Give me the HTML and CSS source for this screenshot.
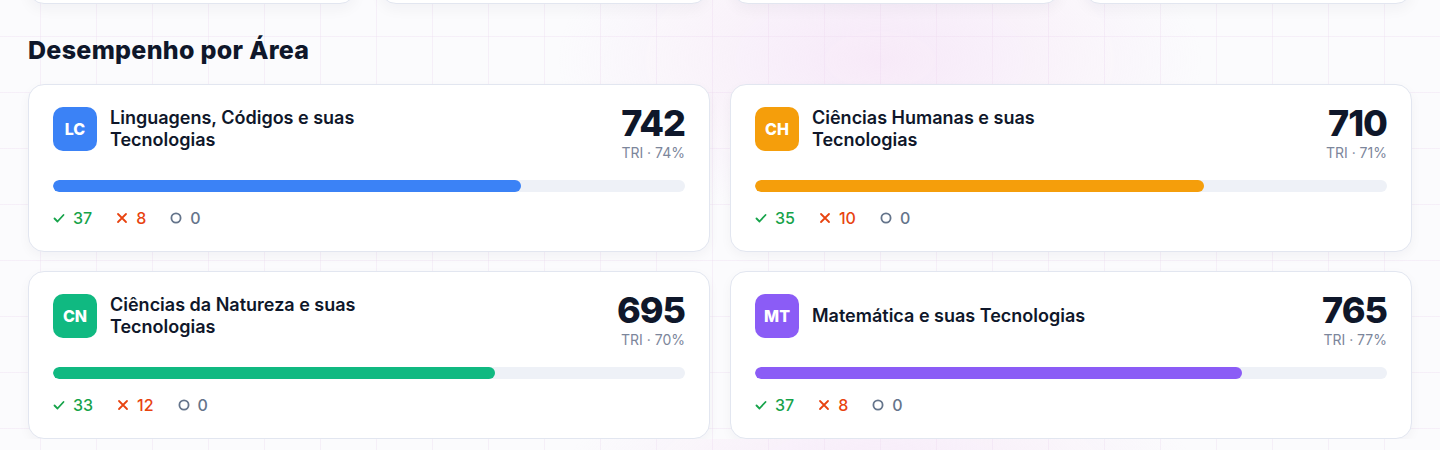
FILE: index.html
```html
<!DOCTYPE html>
<html lang="pt-BR">
<head>
    <meta charset="UTF-8">
    <meta name="viewport" content="width=device-width, initial-scale=1.0">
    <title>Resultado do Simulado</title>
    <link rel="stylesheet" href="styles.css">
</head>
<body>
    <div class="page">
        <!-- Summary cards (scrolled above the fold) -->
        <div class="summary">
            <div class="summary-card"></div>
            <div class="summary-card"></div>
            <div class="summary-card"></div>
            <div class="summary-card"></div>
        </div>

        <h2 class="section-title">Desempenho por Área</h2>

        <div class="area-grid">
            <div class="area-card">
                <div class="area-head">
                    <div class="area-name">
                        <span class="badge badge-lc">LC</span>
                        <span class="area-title">Linguagens, Códigos e suas Tecnologias</span>
                    </div>
                    <div class="area-score">
                        <div class="score-value">742</div>
                        <div class="score-meta">TRI · 74%</div>
                    </div>
                </div>
                <div class="bar"><div class="bar-fill fill-lc" style="width: 74%"></div></div>
                <div class="stats">
                    <span class="stat stat-ok"><svg viewBox="0 0 12 12"><path d="M1.5 6.5l3 3 6-6.5"/></svg>37</span>
                    <span class="stat stat-err"><svg viewBox="0 0 12 12"><path d="M2 2l8 8M10 2l-8 8"/></svg>8</span>
                    <span class="stat stat-skip"><svg viewBox="0 0 12 12"><circle cx="6" cy="6" r="4.6"/></svg>0</span>
                </div>
            </div>

            <div class="area-card">
                <div class="area-head">
                    <div class="area-name">
                        <span class="badge badge-ch">CH</span>
                        <span class="area-title">Ciências Humanas e suas Tecnologias</span>
                    </div>
                    <div class="area-score">
                        <div class="score-value">710</div>
                        <div class="score-meta">TRI · 71%</div>
                    </div>
                </div>
                <div class="bar"><div class="bar-fill fill-ch" style="width: 71%"></div></div>
                <div class="stats">
                    <span class="stat stat-ok"><svg viewBox="0 0 12 12"><path d="M1.5 6.5l3 3 6-6.5"/></svg>35</span>
                    <span class="stat stat-err"><svg viewBox="0 0 12 12"><path d="M2 2l8 8M10 2l-8 8"/></svg>10</span>
                    <span class="stat stat-skip"><svg viewBox="0 0 12 12"><circle cx="6" cy="6" r="4.6"/></svg>0</span>
                </div>
            </div>

            <div class="area-card">
                <div class="area-head">
                    <div class="area-name">
                        <span class="badge badge-cn">CN</span>
                        <span class="area-title">Ciências da Natureza e suas Tecnologias</span>
                    </div>
                    <div class="area-score">
                        <div class="score-value">695</div>
                        <div class="score-meta">TRI · 70%</div>
                    </div>
                </div>
                <div class="bar"><div class="bar-fill fill-cn" style="width: 70%"></div></div>
                <div class="stats">
                    <span class="stat stat-ok"><svg viewBox="0 0 12 12"><path d="M1.5 6.5l3 3 6-6.5"/></svg>33</span>
                    <span class="stat stat-err"><svg viewBox="0 0 12 12"><path d="M2 2l8 8M10 2l-8 8"/></svg>12</span>
                    <span class="stat stat-skip"><svg viewBox="0 0 12 12"><circle cx="6" cy="6" r="4.6"/></svg>0</span>
                </div>
            </div>

            <div class="area-card">
                <div class="area-head">
                    <div class="area-name">
                        <span class="badge badge-mt">MT</span>
                        <span class="area-title">Matemática e suas Tecnologias</span>
                    </div>
                    <div class="area-score">
                        <div class="score-value">765</div>
                        <div class="score-meta">TRI · 77%</div>
                    </div>
                </div>
                <div class="bar"><div class="bar-fill fill-mt" style="width: 77%"></div></div>
                <div class="stats">
                    <span class="stat stat-ok"><svg viewBox="0 0 12 12"><path d="M1.5 6.5l3 3 6-6.5"/></svg>37</span>
                    <span class="stat stat-err"><svg viewBox="0 0 12 12"><path d="M2 2l8 8M10 2l-8 8"/></svg>8</span>
                    <span class="stat stat-skip"><svg viewBox="0 0 12 12"><circle cx="6" cy="6" r="4.6"/></svg>0</span>
                </div>
            </div>
        </div>
    </div>
</body>
</html>
```

FILE: styles.css
```css
body {
    margin: 0;
    overflow: hidden;
    font-family: Inter, "Noto Sans", sans-serif;
    color: #0f172a;
    background-color: #fbfbfd;
    background-image:
        radial-gradient(ellipse 460px 240px at 880px 60px, rgba(242, 212, 242, 0.45), rgba(242, 212, 242, 0) 70%),
        linear-gradient(to right, rgba(236, 218, 238, 0.35) 1px, transparent 1px),
        linear-gradient(to bottom, rgba(236, 218, 238, 0.35) 1px, transparent 1px);
    background-size: auto, 56px 56px, 56px 56px;
    background-position: 0 0, 40px 36px, 40px 36px;
}

.page {
    padding: 0 28px;
}

/* Top summary row, mostly scrolled out of view */
.summary {
    display: grid;
    grid-template-columns: repeat(4, 1fr);
    gap: 24px;
    margin-top: -96px;
}

.summary-card {
    height: 98px;
    background: #fff;
    border: 1px solid #e2e6f0;
    border-radius: 16px;
    box-shadow: 0 6px 14px rgba(15, 23, 42, 0.04);
}

.section-title {
    margin: 30px 0 18px;
    font-size: 25px;
    line-height: 32px;
    font-weight: 800;
    letter-spacing: 0.3px;
}

.area-grid {
    display: grid;
    grid-template-columns: 1fr 1fr;
    gap: 19px 20px;
}

.area-card {
    background: #fff;
    border: 1px solid #e2e6f0;
    border-radius: 16px;
    padding: 22px 24px 23px;
    box-shadow: 0 4px 12px rgba(15, 23, 42, 0.04);
}

.area-head {
    display: flex;
    justify-content: space-between;
    align-items: flex-start;
    margin-bottom: 18px;
}

.area-name {
    display: flex;
    align-items: center;
    gap: 13px;
}

.badge {
    flex: none;
    width: 44px;
    height: 44px;
    border-radius: 10px;
    display: flex;
    align-items: center;
    justify-content: center;
    color: #fff;
    font-size: 16px;
    font-weight: 800;
}

.badge-lc { background: #3b82f6; }
.badge-ch { background: #f59e0b; }
.badge-cn { background: #10b981; }
.badge-mt { background: #8b5cf6; }

.area-title {
    max-width: 290px;
    font-size: 18px;
    line-height: 22px;
    font-weight: 600;
}

.area-score {
    text-align: right;
}

.score-value {
    font-size: 36px;
    line-height: 32px;
    font-weight: 800;
    letter-spacing: -1px;
}

.score-meta {
    margin-top: 5px;
    font-size: 14px;
    line-height: 18px;
    color: #7c869b;
}

.bar {
    height: 12px;
    border-radius: 6px;
    background: #eef1f7;
    overflow: hidden;
}

.bar-fill {
    height: 100%;
    border-radius: 6px;
}

.fill-lc { background: #3b82f6; }
.fill-ch { background: #f59e0b; }
.fill-cn { background: #10b981; }
.fill-mt { background: #8b5cf6; }

.stats {
    display: flex;
    gap: 24px;
    margin-top: 16px;
    font-size: 16px;
    line-height: 20px;
    font-weight: 500;
}

.stat {
    display: flex;
    align-items: center;
    gap: 8px;
}

.stat svg {
    width: 12px;
    height: 12px;
    fill: none;
    stroke: currentColor;
    stroke-width: 1.8;
    stroke-linecap: round;
    stroke-linejoin: round;
}

.stat-ok { color: #16a34a; }
.stat-err { color: #e8430f; }
.stat-skip { color: #64748b; }
```
